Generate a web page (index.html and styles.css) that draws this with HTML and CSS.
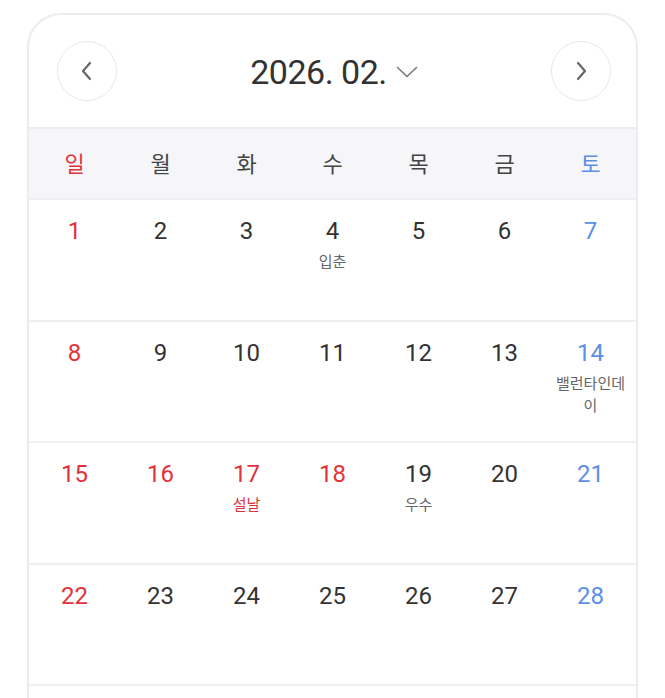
FILE: index.html
```html
<!DOCTYPE html>
<html lang="ko">
<head>
<meta charset="utf-8">
<link rel="stylesheet" href="styles.css">
</head>
<body>
<div class="card">
  <div class="header">
    <button class="nav">
      <svg width="14" height="20" viewBox="0 0 14 20"><path d="M10 2 L3 10 L10 18" fill="none" stroke="#666" stroke-width="2.2" stroke-linecap="round" stroke-linejoin="round"/></svg>
    </button>
    <div class="title">
      <span class="ym">2026. 02.</span>
      <svg class="caret" width="22" height="12" viewBox="0 0 22 12"><path d="M1.5 1.5 L11 10.5 L20.5 1.5" fill="none" stroke="#777" stroke-width="1.6" stroke-linecap="round" stroke-linejoin="round"/></svg>
    </div>
    <button class="nav">
      <svg width="14" height="20" viewBox="0 0 14 20"><path d="M4 2 L11 10 L4 18" fill="none" stroke="#666" stroke-width="2.2" stroke-linecap="round" stroke-linejoin="round"/></svg>
    </button>
  </div>
  <div class="weekdays">
    <div class="wd sun">일</div>
    <div class="wd">월</div>
    <div class="wd">화</div>
    <div class="wd">수</div>
    <div class="wd">목</div>
    <div class="wd">금</div>
    <div class="wd sat">토</div>
  </div>
  <div class="week">
    <div class="day sun"><span class="num">1</span></div>
    <div class="day"><span class="num">2</span></div>
    <div class="day"><span class="num">3</span></div>
    <div class="day"><span class="num">4</span><span class="label">입춘</span></div>
    <div class="day"><span class="num">5</span></div>
    <div class="day"><span class="num">6</span></div>
    <div class="day sat"><span class="num">7</span></div>
  </div>
  <div class="week">
    <div class="day sun"><span class="num">8</span></div>
    <div class="day"><span class="num">9</span></div>
    <div class="day"><span class="num">10</span></div>
    <div class="day"><span class="num">11</span></div>
    <div class="day"><span class="num">12</span></div>
    <div class="day"><span class="num">13</span></div>
    <div class="day sat"><span class="num">14</span><span class="label">밸런타인데이</span></div>
  </div>
  <div class="week">
    <div class="day sun"><span class="num">15</span></div>
    <div class="day sun"><span class="num">16</span></div>
    <div class="day sun"><span class="num">17</span><span class="label holiday">설날</span></div>
    <div class="day sun"><span class="num">18</span></div>
    <div class="day"><span class="num">19</span><span class="label">우수</span></div>
    <div class="day"><span class="num">20</span></div>
    <div class="day sat"><span class="num">21</span></div>
  </div>
  <div class="week">
    <div class="day sun"><span class="num">22</span></div>
    <div class="day"><span class="num">23</span></div>
    <div class="day"><span class="num">24</span></div>
    <div class="day"><span class="num">25</span></div>
    <div class="day"><span class="num">26</span></div>
    <div class="day"><span class="num">27</span></div>
    <div class="day sat"><span class="num">28</span></div>
  </div>
  <div class="week"></div>
</div>
</body>
</html>
```
FILE: styles.css
```css
* { box-sizing: border-box; }
html, body { margin: 0; padding: 0; background: #fff; }
body {
  font-family: Roboto, "Noto Sans CJK KR", sans-serif;
  color: #333;
  overflow: hidden;
}
.card {
  margin: 13px 0 0 27px;
  width: 611px;
  border: 2px solid #ececf0;
  border-bottom: none;
  border-radius: 34px 34px 0 0;
  overflow: hidden;
}
.header {
  height: 114px;
  display: flex;
  align-items: center;
  justify-content: space-between;
  padding: 0 25px 0 28px;
  border-bottom: 2px solid #ececf0;
}
.nav {
  width: 60px;
  height: 60px;
  border-radius: 50%;
  border: 1.5px solid #e6e6e8;
  background: #fff;
  display: flex;
  align-items: center;
  justify-content: center;
  padding: 0;
}
.title {
  display: flex;
  align-items: center;
  gap: 9px;
  padding-top: 2px;
}
.ym {
  font-size: 34px;
  letter-spacing: -0.5px;
  color: #333;
  line-height: 40px;
}
.weekdays {
  display: grid;
  grid-template-columns: repeat(7, 1fr);
  height: 71px;
  padding: 0 2.5px 3px;
  background: #f6f6f9;
  align-items: center;
  border-bottom: 2px solid #efeff2;
}
.wd {
  text-align: center;
  font-family: "Noto Sans CJK KR", sans-serif;
  font-size: 22px;
  color: #444;
}
.wd.sun { color: #e3323a; }
.wd.sat { color: #5a90e6; }
.week {
  display: grid;
  grid-template-columns: repeat(7, 1fr);
  height: 121.6px;
  padding: 0 2.5px;
  border-bottom: 2px solid #efeff2;
}
.day {
  display: flex;
  flex-direction: column;
  align-items: center;
  padding: 17px 4px 0;
  text-align: center;
}
.num {
  font-size: 24px;
  line-height: 28px;
  color: #333;
}
.label {
  margin-top: 5px;
  font-family: "Noto Sans CJK KR", sans-serif;
  font-size: 15px;
  line-height: 22px;
  color: #666;
  word-break: break-all;
}
.day.sun .num { color: #e3323a; }
.day.sat .num { color: #5a90e6; }
.label.holiday { color: #e3323a; }
```
